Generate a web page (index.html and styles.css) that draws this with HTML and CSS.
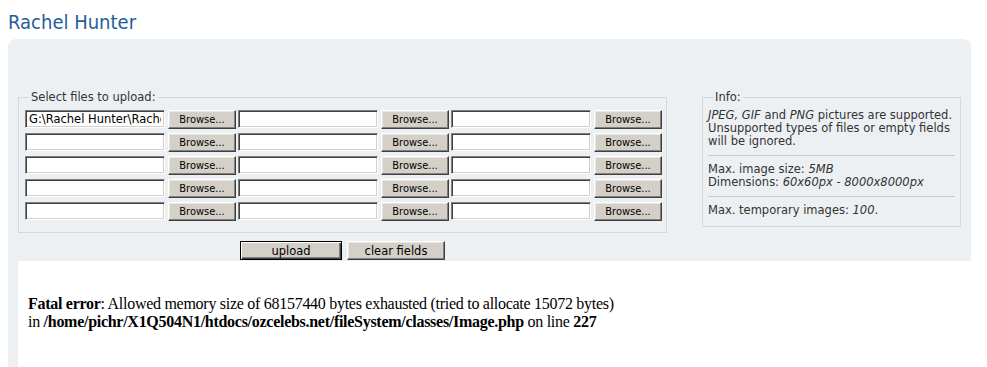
FILE: index.html
```html
<!DOCTYPE html>
<html lang="en">
<head>
  <meta charset="UTF-8" />
  <title>Rachel Hunter - Upload</title>
  <link rel="stylesheet" href="styles.css">
</head>
<body>
  <h1 class="title">Rachel Hunter</h1>

  <div class="panel">
    <div class="panel-row">
      <fieldset class="files">
        <legend>Select files to upload:</legend>
        <div class="file-grid">
          <span class="file"><input type="text" class="file-path" value="G:\Rachel Hunter\Rachel Hunter 01.jpg"><button class="browse">Browse...</button></span>
          <span class="file"><input type="text" class="file-path"><button class="browse">Browse...</button></span>
          <span class="file"><input type="text" class="file-path"><button class="browse">Browse...</button></span>
          <span class="file"><input type="text" class="file-path"><button class="browse">Browse...</button></span>
          <span class="file"><input type="text" class="file-path"><button class="browse">Browse...</button></span>
          <span class="file"><input type="text" class="file-path"><button class="browse">Browse...</button></span>
          <span class="file"><input type="text" class="file-path"><button class="browse">Browse...</button></span>
          <span class="file"><input type="text" class="file-path"><button class="browse">Browse...</button></span>
          <span class="file"><input type="text" class="file-path"><button class="browse">Browse...</button></span>
          <span class="file"><input type="text" class="file-path"><button class="browse">Browse...</button></span>
          <span class="file"><input type="text" class="file-path"><button class="browse">Browse...</button></span>
          <span class="file"><input type="text" class="file-path"><button class="browse">Browse...</button></span>
          <span class="file"><input type="text" class="file-path"><button class="browse">Browse...</button></span>
          <span class="file"><input type="text" class="file-path"><button class="browse">Browse...</button></span>
          <span class="file"><input type="text" class="file-path"><button class="browse">Browse...</button></span>
        </div>
      </fieldset>

      <fieldset class="info">
        <legend>Info:</legend>
        <div class="info-block">
          <i>JPEG, GIF</i> and <i>PNG</i> pictures are supported.<br>
          Unsupported types of files or empty fields will be ignored.
        </div>
        <div class="info-block">
          Max. image size: <i>5MB</i><br>
          Dimensions: <i>60x60px - 8000x8000px</i>
        </div>
        <div class="info-block">
          Max. temporary images: <i>100</i>.
        </div>
      </fieldset>
    </div>

    <div class="actions">
      <button class="btn btn-default">upload</button>
      <button class="btn">clear fields</button>
    </div>
  </div>

  <div class="error-area">
    <b>Fatal error</b>: Allowed memory size of 68157440 bytes exhausted (tried to allocate 15072 bytes)<br>
    in <b>/home/pichr/X1Q504N1/htdocs/ozcelebs.net/fileSystem/classes/Image.php</b> on line <b>227</b>
  </div>
</body>
</html>
```

FILE: styles.css
```css
body {
  margin: 0;
  background: #fff;
  font-family: "DejaVu Sans", Verdana, sans-serif;
  font-size: 11.5px;
  color: #333;
}
.title {
  margin: 10px 0 5px 8px;
  font-family: "DejaVu Sans Condensed", "DejaVu Sans", sans-serif;
  font-size: 20px;
  font-weight: normal;
  line-height: 24px;
  color: #1f5e9b;
}
.panel {
  margin-left: 8px;
  width: 963px;
  padding-top: 52px;
  background: #edf0f3;
  border-radius: 8px 8px 0 0;
}
.panel-row {
  display: flex;
  align-items: flex-start;
}
fieldset {
  margin: 0;
  box-sizing: border-box;
  border: 1px solid #d3d8de;
}
legend {
  padding: 0 2px;
  line-height: 13px;
  color: #333;
}
.files {
  margin-left: 10px;
  width: 649px;
  padding: 6px 4px 11px 6px;
}
.files legend {
  margin-left: 4px;
}
.file-grid {
  display: grid;
  grid-template-columns: repeat(3, 211px);
  column-gap: 2px;
  row-gap: 4px;
}
.file {
  display: flex;
  align-items: flex-start;
  gap: 3px;
}
.file-path {
  box-sizing: border-box;
  width: 140px;
  height: 18px;
  margin: 0;
  padding: 0 3px;
  background: #fff;
  border: 1px solid;
  border-color: #808080 #fff #fff #808080;
  box-shadow: inset 1px 1px #404040, inset -1px -1px #d4d0c8;
  font-family: "DejaVu Sans", Verdana, sans-serif;
  font-size: 11.5px;
  color: #000;
  outline: none;
}
.browse,
.btn {
  box-sizing: border-box;
  margin: 0;
  padding: 0;
  background: #d4d0c8;
  border: 1px solid;
  border-color: #fff #404040 #404040 #fff;
  box-shadow: inset -1px -1px #808080, inset 1px 1px #e8e6e1;
  color: #000;
  cursor: pointer;
}
.browse {
  width: 68px;
  height: 19px;
  font-family: "DejaVu Sans Condensed", Tahoma, sans-serif;
  font-size: 11px;
}
.info {
  margin-left: 35px;
  width: 259px;
  padding: 5px 5px 9px 5px;
}
.info legend {
  margin-left: 5px;
}
.info-block {
  line-height: 13px;
}
.info-block + .info-block {
  margin-top: 7px;
  padding-top: 7px;
  border-top: 1px solid #c9cbcd;
}
.actions {
  margin-left: 10px;
  width: 649px;
  padding: 8px 0 1px;
  display: flex;
  justify-content: center;
  gap: 5px;
}
.btn {
  width: 98px;
  height: 19px;
  font-family: "DejaVu Sans", Verdana, sans-serif;
  font-size: 11.5px;
}
.btn-default {
  width: 102px;
  border-color: #000;
  box-shadow: inset 1px 1px #fff, inset -1px -1px #404040, inset -2px -2px #808080;
}
.error-area {
  margin-left: 8px;
  border-left: 10px solid #edf0f3;
  padding: 34px 0 40px 10px;
  font-family: "Liberation Serif", "Times New Roman", serif;
  font-size: 16px;
  letter-spacing: -0.28px;
  color: #000;
}
```
